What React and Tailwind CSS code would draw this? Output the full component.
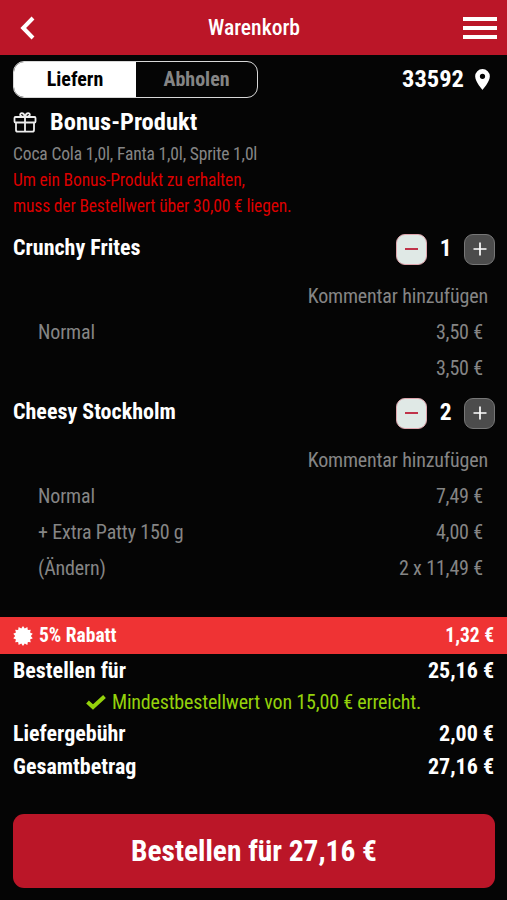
import React from "react";

const line = "flex items-center justify-between";

function Stepper({ count }) {
  return (
    <div className="flex items-center">
      <button className="flex h-[31px] w-[31px] items-center justify-center rounded-[9px] border border-[#dfa6ae] bg-[#e0e9e6]">
        <span className="h-[2px] w-[13px] bg-[#c0334a]" />
      </button>
      <span className="w-[37px] text-center text-[23.5px] font-bold text-white">{count}</span>
      <button className="flex h-[31px] w-[31px] items-center justify-center rounded-[9px] border border-[#777] bg-[#4c4c4c]">
        <svg width="14" height="14" viewBox="0 0 14 14" stroke="#fff" strokeWidth="1.7">
          <path d="M7 .5v13M.5 7h13" />
        </svg>
      </button>
    </div>
  );
}

function Item({ name, count, rows }) {
  return (
    <section>
      <div className={`${line} h-[31px] pr-3 pl-[13px]`}>
        <h3 className="-mt-[2px] text-[22px] font-bold tracking-normal text-white">{name}</h3>
        <Stepper count={count} />
      </div>
      <p className="mt-[13px] h-9 pr-[19px] text-right leading-9">Kommentar hinzufügen</p>
      <div className="pt-px">
        {rows.map(([label, price], i) => (
          <div key={i} className={`${line} h-[35.6px] pr-[24px] pl-[38px]`}>
            <span>{label}</span>
            <span>{price}</span>
          </div>
        ))}
      </div>
    </section>
  );
}

const badge = Array.from({ length: 28 }, (_, i) => {
  const r = i % 2 ? 7.8 : 10;
  const a = (i * Math.PI) / 14;
  return `${(r * Math.sin(a)).toFixed(2)},${(-r * Math.cos(a)).toFixed(2)}`;
}).join(" ");

export default function App() {
  return (
    <main className="flex h-[900px] w-[507px] flex-col overflow-hidden bg-[#050505] font-['Roboto_Condensed',Roboto,sans-serif] text-[20px] leading-none text-[#858585] [font-stretch:75%]">
      <header className={`${line} h-[54.5px] shrink-0 bg-[#bb1628] pt-px pr-[10px] pl-5`}>
        <svg width="34" height="24" viewBox="0 0 34 24" fill="none" stroke="#fff" strokeWidth="4">
          <path d="M13 2 3.200 12 13 22" />
        </svg>
        <h1 className="-ml-[9px] text-[21.6px] font-medium text-white">Warenkorb</h1>
        <div className="flex w-[34px] flex-col gap-[5px]">
          <i className="h-[4px] bg-white" />
          <i className="h-[4px] bg-white" />
          <i className="h-[4px] bg-white" />
        </div>
      </header>

      <div className={`${line} mt-[6px] h-[37px] shrink-0 pr-[17px] pl-[13px] font-bold`}>
        <div className="flex h-[37px] w-[245px] overflow-hidden rounded-[11px] border border-[#d8d8d8] text-[20px]">
          <span className="flex w-[122px] items-center justify-center bg-white text-black">Liefern</span>
          <span className="flex flex-1 items-center justify-center">Abholen</span>
        </div>
        <div className="flex items-center gap-[11px] text-[24.5px] text-white">
          33592
          <svg width="15" height="21" viewBox="5 2 14 20" fill="#fff">
            <path d="M12 2a7 7 0 0 0-7 7c0 5.250 7 13 7 13s7-7.750 7-13a7 7 0 0 0-7-7zm0 9.500a2.500 2.500 0 1 1 0-5 2.500 2.500 0 0 1 0 5z" />
          </svg>
        </div>
      </div>

      <div className="flex h-[43px] shrink-0 items-center gap-[13px] pt-[7px] pl-[13px]">
        <svg width="24" height="21" viewBox="0 0 24 21" fill="none" stroke="#eee" strokeWidth="1.8">
          <rect x="1.500" y="5" width="21" height="5.500" rx="1" />
          <path d="M3 10.500v7.500q0 1.700 1.700 1.700h14.600q1.700 0 1.700-1.700v-7.500M12 5v14.500M11.800 5C6 5 6.500 1.200 8.800 1.200 10.800 1.200 11.500 3 12 5c.5-2 1.200-3.800 3.200-3.800C17.500 1.200 18 5 12.200 5" />
        </svg>
        <h2 className="text-[24.5px] font-bold text-white">Bonus-Produkt</h2>
      </div>
      <div className="h-[93px] shrink-0 pl-[13px] text-[17.5px] leading-[26px] tracking-[-0.16px]">
        <p>Coca Cola 1,0l, Fanta 1,0l, Sprite 1,0l</p>
        <p className="text-[#dc0000]">Um ein Bonus-Produkt zu erhalten,</p>
        <p className="text-[#dc0000]">muss der Bestellwert über 30,00 € liegen.</p>
      </div>

      <div className="flex flex-col gap-[12px] tracking-[-0.15px]">
        <Item name="Crunchy Frites" count={1} rows={[["Normal", "3,50 €"], ["", "3,50 €"]]} />
        <Item
          name="Cheesy Stockholm"
          count={2}
          rows={[["Normal", "7,49 €"], ["+ Extra Patty 150 g", "4,00 €"], ["(Ändern)", "2 x 11,49 €"]]}
        />
      </div>

      <footer className="mt-auto text-[22px] font-bold text-white">
        <div className={`${line} h-[37px] bg-[#ef3334] px-[13px] pt-px text-[19.5px]`}>
          <span className="flex items-center gap-[6px]">
            <svg width="20" height="20" viewBox="-10 -10 20 20" fill="#fff">
              <polygon points={badge} />
            </svg>
            5% Rabatt
          </span>
          <span>1,32 €</span>
        </div>
        <div className={`${line} h-[33px] px-[13px]`}>
          <span>Bestellen für</span>
          <span>25,16 €</span>
        </div>
        <p className="flex h-[30px] items-center justify-center gap-[6px] text-[20px] font-normal tracking-[-0.19px] text-[#94d20b]">
          <svg width="20" height="15" viewBox="0 0 20 15" fill="none" stroke="#94d20b" strokeWidth="4">
            <path d="m1.500 7 5.500 5L18.500 1.500" />
          </svg>
          Mindestbestellwert von 15,00 € erreicht.
        </p>
        <div className={`${line} h-[33px] px-[13px]`}>
          <span>Liefergebühr</span>
          <span>2,00 €</span>
        </div>
        <div className={`${line} h-[33px] px-[13px]`}>
          <span>Gesamtbetrag</span>
          <span>27,16 €</span>
        </div>
        <button className="mx-[13px] mt-[31px] mb-3 flex h-[74px] w-[482px] items-center justify-center rounded-[11px] bg-[#bb1628] pt-px text-[29.4px] font-bold">
          Bestellen für 27,16 €
        </button>
      </footer>
    </main>
  );
}
